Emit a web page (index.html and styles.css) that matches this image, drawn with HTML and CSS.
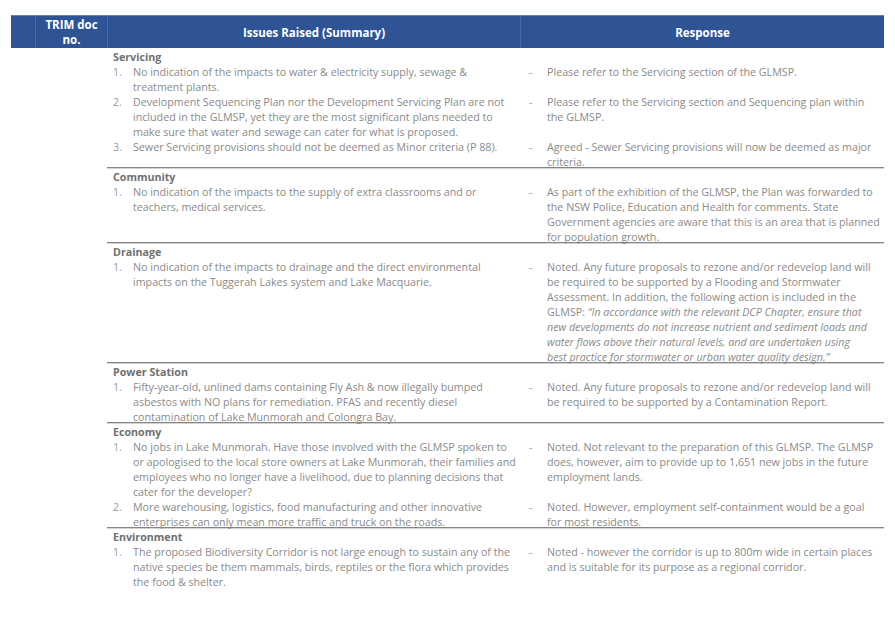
FILE: index.html
```html
<!DOCTYPE html>
<html lang="en">
<head>
<meta charset="utf-8">
<title>GLMSP submissions</title>
<link rel="stylesheet" href="styles.css">
</head>
<body>
<div class="doc">
  <div class="head">
    <div class="hcell"></div>
    <div class="hcell trim">TRIM doc<br>no.</div>
    <div class="hcell">Issues Raised (Summary)</div>
    <div class="hcell">Response</div>
  </div>
  <div class="rows">
    <section class="group">
      <div class="cat">Servicing</div>
      <div class="item">
        <div class="issue"><span class="num">1.</span><span class="txt">No indication of the impacts to water &amp; electricity supply, sewage &amp; treatment plants.</span></div>
        <div class="resp"><span class="dash">-</span><span class="txt">Please refer to the Servicing section of the GLMSP.</span></div>
      </div>
      <div class="item">
        <div class="issue"><span class="num">2.</span><span class="txt">Development Sequencing Plan nor the Development Servicing Plan are not included in the GLMSP, yet they are the most significant plans needed to make sure that water and sewage can cater for what is proposed.</span></div>
        <div class="resp"><span class="dash">-</span><span class="txt">Please refer to the Servicing section and Sequencing plan within<br>the GLMSP.</span></div>
      </div>
      <div class="item">
        <div class="issue"><span class="num">3.</span><span class="txt">Sewer Servicing provisions should not be deemed as Minor criteria (P 88).</span></div>
        <div class="resp"><span class="dash">-</span><span class="txt">Agreed - Sewer Servicing provisions will now be deemed as major<br>criteria.</span></div>
      </div>
    </section>
    <section class="group">
      <div class="cat">Community</div>
      <div class="item">
        <div class="issue"><span class="num">1.</span><span class="txt">No indication of the impacts to the supply of extra classrooms and or teachers, medical services.</span></div>
        <div class="resp"><span class="dash">-</span><span class="txt">As part of the exhibition of the GLMSP, the Plan was forwarded to<br>the NSW Police, Education and Health for comments. State<br>Government agencies are aware that this is an area that is planned<br>for population growth.</span></div>
      </div>
    </section>
    <section class="group">
      <div class="cat">Drainage</div>
      <div class="item">
        <div class="issue"><span class="num">1.</span><span class="txt">No indication of the impacts to drainage and the direct environmental impacts on the Tuggerah Lakes system and Lake Macquarie.</span></div>
        <div class="resp"><span class="dash">-</span><span class="txt">Noted. Any future proposals to rezone and/or redevelop land will<br>be required to be supported by a Flooding and Stormwater<br>Assessment. In addition, the following action is included in the<br>GLMSP: <em>“In accordance with the relevant DCP Chapter, ensure that<br>new developments do not increase nutrient and sediment loads and<br>water flows above their natural levels, and are undertaken using<br>best practice for stormwater or urban water quality design.”</em></span></div>
      </div>
    </section>
    <section class="group">
      <div class="cat">Power Station</div>
      <div class="item">
        <div class="issue"><span class="num">1.</span><span class="txt">Fifty-year-old, unlined dams containing Fly Ash &amp; now illegally bumped asbestos with NO plans for remediation. PFAS and recently diesel contamination of Lake Munmorah and Colongra Bay.</span></div>
        <div class="resp"><span class="dash">-</span><span class="txt">Noted. Any future proposals to rezone and/or redevelop land will<br>be required to be supported by a Contamination Report.</span></div>
      </div>
    </section>
    <section class="group">
      <div class="cat">Economy</div>
      <div class="item">
        <div class="issue"><span class="num">1.</span><span class="txt">No jobs in Lake Munmorah. Have those involved with the GLMSP spoken to or apologised to the local store owners at Lake Munmorah, their families and employees who no longer have a livelihood, due to planning decisions that cater for the developer?</span></div>
        <div class="resp"><span class="dash">-</span><span class="txt">Noted. Not relevant to the preparation of this GLMSP. The GLMSP<br>does, however, aim to provide up to 1,651 new jobs in the future<br>employment lands.</span></div>
      </div>
      <div class="item">
        <div class="issue"><span class="num">2.</span><span class="txt">More warehousing, logistics, food manufacturing and other innovative enterprises can only mean more traffic and truck on the roads.</span></div>
        <div class="resp"><span class="dash">-</span><span class="txt">Noted. However, employment self-containment would be a goal<br>for most residents.</span></div>
      </div>
    </section>
    <section class="group last">
      <div class="cat">Environment</div>
      <div class="item">
        <div class="issue"><span class="num">1.</span><span class="txt">The proposed Biodiversity Corridor is not large enough to sustain any of the native species be them mammals, birds, reptiles or the flora which provides the food &amp; shelter.</span></div>
        <div class="resp"><span class="dash">-</span><span class="txt">Noted - however the corridor is up to 800m wide in certain places<br>and is suitable for its purpose as a regional corridor.</span></div>
      </div>
    </section>
  </div>
</div>
</body>
</html>
```
FILE: styles.css
```css
html, body {
  margin: 0;
  padding: 0;
  background: #ffffff;
}
.doc {
  padding: 15px 0 0 11px;
  width: 873px;
  font-family: "Open Sans", "Noto Sans", sans-serif;
}
.head {
  display: grid;
  grid-template-columns: 24px 72px 413px 364px;
  height: 33px;
  background: #2f5496;
  border-top: 1px solid #6d7f9f;
  box-sizing: border-box;
}
.hcell {
  display: flex;
  align-items: center;
  justify-content: center;
  text-align: center;
  color: #ffffff;
  font-weight: 700;
  font-size: 11.5px;
  line-height: 15px;
  border-left: 1px solid #4d68a3;
}
.hcell:first-child {
  border-left: none;
}
.rows {
  margin-left: 96px;
  width: 777px;
}
.group {
  padding-top: 2px;
  border-bottom: 1px solid #858585;
  box-shadow: 0 1px 0 #d4d4d4;
}
.group > .item:last-child {
  margin-bottom: -3px;
}
.group.last {
  border-bottom: none;
  box-shadow: none;
}
.cat {
  padding-left: 6px;
  font-size: 10.7px;
  line-height: 15px;
  font-weight: 700;
  color: #707070;
}
.item {
  display: grid;
  grid-template-columns: 413px 364px;
  font-size: 10.7px;
  line-height: 15px;
  color: #8a8a8a;
}
.issue, .resp {
  display: flex;
}
.issue {
  padding-left: 6px;
  padding-right: 4px;
}
.resp {
  padding-left: 9px;
  padding-right: 2px;
}
.resp .txt {
  white-space: nowrap;
}
.num {
  flex: 0 0 20px;
  color: #9c9c9c;
}
.dash {
  flex: 0 0 18px;
  color: #9c9c9c;
}
.txt {
  flex: 1 1 auto;
  min-width: 0;
}
em {
  font-style: italic;
  line-height: 15px;
}
```
